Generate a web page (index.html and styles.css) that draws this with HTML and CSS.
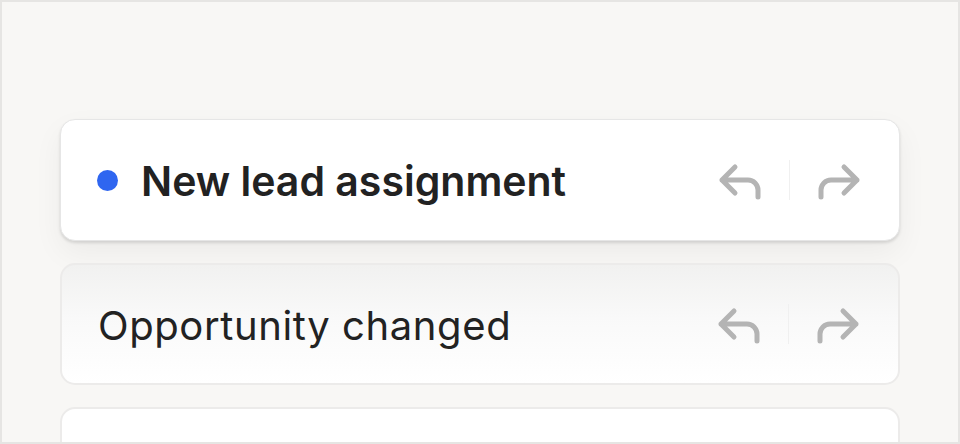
FILE: index.html
```html
<!DOCTYPE html>
<html lang="en">
<head>
    <meta charset="UTF-8">
    <meta name="viewport" content="width=device-width, initial-scale=1.0">
    <title>Notifications</title>
    <link rel="stylesheet" href="styles.css">
</head>
<body>
    <div class="frame">
        <div class="card card-active">
            <span class="dot"></span>
            <span class="title title-bold">New lead assignment</span>
            <div class="actions">
                <svg class="icon" viewBox="0 0 44 40"><path d="M17 7 L4 20 L17 33 M4 20 H30 A10 10 0 0 1 40 30 V37"/></svg>
                <span class="divider"></span>
                <svg class="icon" viewBox="0 0 44 40"><path d="M27 7 L40 20 L27 33 M40 20 H14 A10 10 0 0 0 4 30 V37"/></svg>
            </div>
        </div>
        <div class="card card-muted">
            <span class="title">Opportunity changed</span>
            <div class="actions">
                <svg class="icon" viewBox="0 0 44 40"><path d="M17 7 L4 20 L17 33 M4 20 H30 A10 10 0 0 1 40 30 V37"/></svg>
                <span class="divider"></span>
                <svg class="icon" viewBox="0 0 44 40"><path d="M27 7 L40 20 L27 33 M40 20 H14 A10 10 0 0 0 4 30 V37"/></svg>
            </div>
        </div>
        <div class="card card-next"></div>
    </div>
</body>
</html>
```

FILE: styles.css
```css
* {
    box-sizing: border-box;
}
body {
    margin: 0;
    font-family: Inter, "Noto Sans", sans-serif;
    color: #222222;
}
.frame {
    width: 960px;
    height: 444px;
    border: 2px solid #e6e5e3;
    background-color: #f8f7f5;
    padding: 117px 58px 0 58px;
    display: flex;
    flex-direction: column;
    gap: 22px;
    overflow: hidden;
}
.card {
    flex-shrink: 0;
    height: 122px;
    border-radius: 15px;
    display: flex;
    align-items: center;
    padding: 0 38px 0 36px;
}
.card-active {
    background-color: #ffffff;
    border: 1px solid #e6e6e6;
    box-shadow: 0 2px 3px rgba(0, 0, 0, 0.12), 0 12px 30px rgba(0, 0, 0, 0.05);
}
.card-muted {
    background: linear-gradient(to bottom, #f1f1f0, #f9f9f9 45%, #ffffff);
    border: 2px solid #ecebea;
}
.card-next {
    background-color: #ffffff;
    border: 2px solid #ecebea;
}
.dot {
    width: 21px;
    height: 21px;
    border-radius: 50%;
    background-color: #2f66f0;
    margin-right: 23px;
}
.title {
    font-size: 40px;
    font-weight: 400;
    letter-spacing: 0.6px;
    margin-top: 2px;
}
.title-bold {
    font-size: 41px;
    font-weight: 600;
    letter-spacing: 0;
}
.actions {
    margin-left: auto;
    display: flex;
    align-items: center;
}
.icon {
    width: 44px;
    height: 40px;
    fill: none;
    stroke: #b4b4b4;
    stroke-width: 5;
    stroke-linecap: round;
    stroke-linejoin: round;
}
.divider {
    width: 1px;
    height: 40px;
    background-color: #f0f0f0;
    margin: 0 27px;
}
```
